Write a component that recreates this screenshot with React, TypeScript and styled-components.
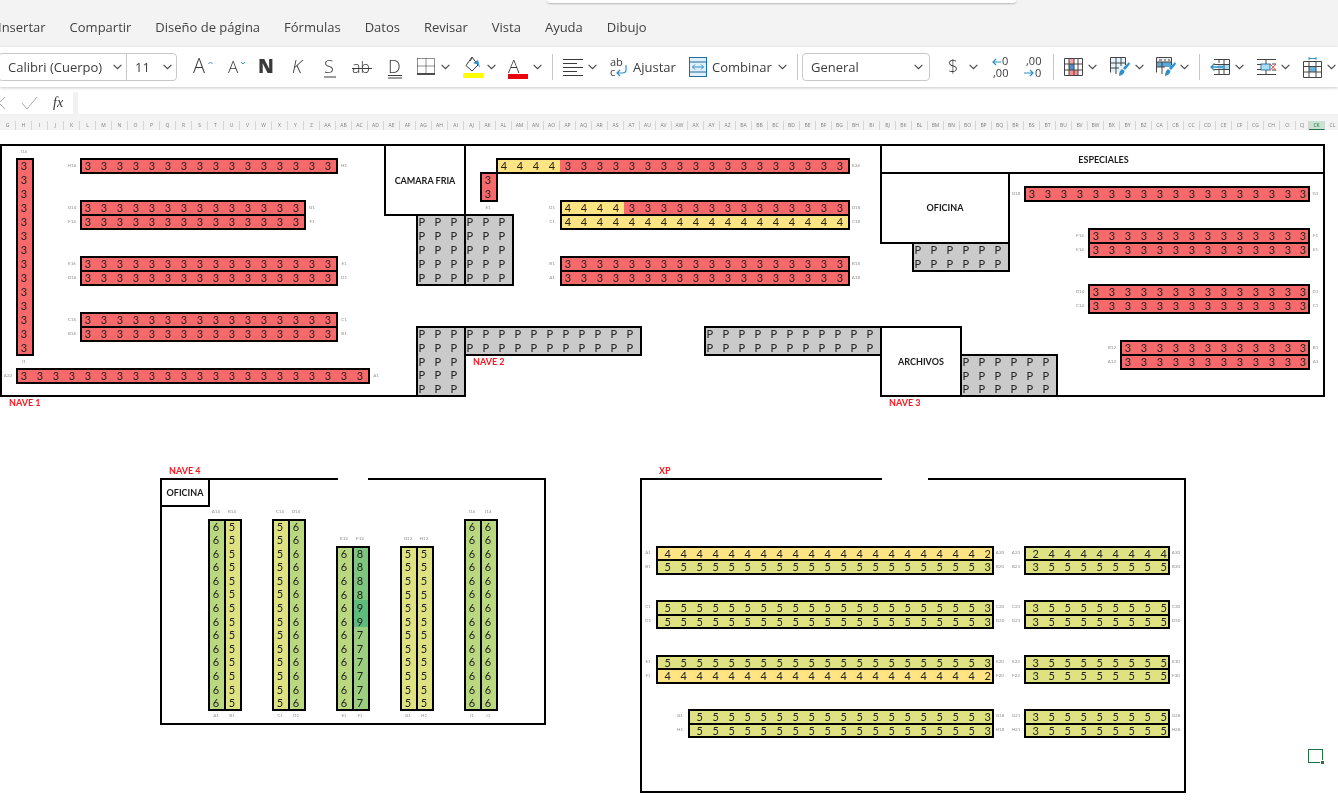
import React from "react";
import styled, {createGlobalStyle} from "styled-components";

const GlobalStyle = createGlobalStyle`
  html, body {
    margin: 0;
    padding: 0;
    height: 100%;
    overflow: hidden;
    background: white;
    font-family: "Open Sans", "Liberation Sans", sans-serif;
  }
`

const Page = styled.div`
  width: 1338px;
  height: 803px;
  overflow: hidden;
  filter: blur(0.4px);
`

const TopArea = styled.div`
  height: 47px;
  background: #F3F3F3;
`

const SearchStub = styled.div`
  margin-left: 547px;
  width: 469px;
  height: 3px;
  background: white;
  border-radius: 0 0 5px 5px;
  box-shadow: 0 1px 2px rgba(0, 0, 0, .25);
`

const Tabs = styled.div`
  display: flex;
  gap: 24px;
  margin-left: -2px;
  padding-top: 15px;
  font-size: 13px;
  line-height: 18px;
  color: #424242;
  white-space: nowrap;
`

const Ribbon = styled.div`
  position: relative;
  height: 40px;
  display: flex;
  align-items: center;
  background: white;
  box-shadow: 0 1px 3px rgba(0, 0, 0, .22);
  color: #3c3c3c;
  white-space: nowrap;
`

const SelectGroup = styled.div`
  display: flex;
  margin-left: -2px;
  width: 179px;
  height: 28px;
  box-sizing: border-box;
  border: 1px solid #c9c9c9;
  border-radius: 4px;
  font-size: 13px;
`

const SelectPart = styled.div<{ $w: number, $pad: number, $line?: boolean }>`
  width: ${p => p.$w}px;
  box-sizing: border-box;
  display: flex;
  align-items: center;
  justify-content: space-between;
  padding: 0 4px 0 ${p => p.$pad}px;
  border-right: ${p => p.$line ? '1px solid #c9c9c9' : 'none'};
`

const NumberSelect = styled(SelectPart)`
  margin-left: 4px;
  height: 28px;
  border: 1px solid #c9c9c9;
  border-radius: 4px;
  font-size: 13px;
  padding-right: 6px;
`

const Icon = styled.svg<{ $ml: number }>`
  display: block;
  flex: none;
  margin-left: ${p => p.$ml}px;
  font-family: "Open Sans", sans-serif;
  overflow: visible;
`

const ToolText = styled.span<{ $ml: number, $w: number }>`
  flex: none;
  margin-left: ${p => p.$ml}px;
  width: ${p => p.$w}px;
  font-size: 13px;
`

const Separator = styled.span<{ $ml: number }>`
  flex: none;
  margin-left: ${p => p.$ml}px;
  width: 1px;
  height: 26px;
  background: #c6c6c6;
`

const FormulaRow = styled.div`
  display: flex;
  gap: 5px;
  margin-top: 5px;
  height: 22px;
  padding-bottom: 1px;
  background: #F1F1F1;
`

const FormulaTools = styled.div`
  width: 73px;
  background: white;
  display: flex;
  align-items: center;
  overflow: hidden;
`

const FxMark = styled.span`
  margin-left: 15px;
  font-family: "Liberation Serif", serif;
  font-style: italic;
  font-size: 14px;
  color: #333;
`

const FormulaInput = styled.div`
  flex: 1;
  background: white;
`

const ColumnHeader = styled.div`
  display: flex;
  height: 15px;
  background: #F3F3F3;
  overflow: hidden;
`

const ColumnCell = styled.div<{ $w: number, $active: boolean }>`
  flex: none;
  width: ${p => p.$w}px;
  box-sizing: border-box;
  margin-top: 6px;
  height: 9px;
  line-height: 9px;
  text-align: center;
  font-size: 5px;
  color: ${p => p.$active ? '#1d6b40' : '#808080'};
  background: ${p => p.$active ? '#c8e3d1' : 'transparent'};
  border-right: 1px solid #d6d6d6;
  border-bottom: ${p => p.$active ? '1px solid #217346' : 'none'};
`

const Sheet = styled.div`
  padding-top: 14px;
  display: grid;
  grid-template-columns: repeat(81, 16px) 12px 15px repeat(2, 16px);
  grid-template-rows: repeat(17, 14px) 13px 15px repeat(4, 13.5px) 13.7px repeat(23, 13.62px);
  font-family: Lato, "Liberation Sans", sans-serif;
  background: white;
`

const WallBox = styled.div<{ $col: number, $row: number, $span: number, $rows: number, $sides: string }>`
  grid-column: ${p => p.$col + 1} / span ${p => p.$span};
  grid-row: ${p => p.$row + 1} / span ${p => p.$rows};
  margin: 0 -2px -2px 0;
  box-sizing: border-box;
  border-style: solid;
  border-color: #000;
  border-top-width: ${p => p.$sides.includes('t') ? 2 : 0}px;
  border-left-width: ${p => p.$sides.includes('l') ? 2 : 0}px;
  border-bottom-width: ${p => p.$sides.includes('b') ? 2 : 0}px;
  border-right-width: ${p => p.$sides.includes('r') ? 2 : 0}px;
  display: flex;
  align-items: center;
  justify-content: center;
  font-size: 9px;
  font-weight: 700;
  color: #1a1a1a;
  white-space: nowrap;
`

const RackBox = styled.div<{ $col: number, $row: number, $cols: number, $rows: number, $narrow: boolean }>`
  grid-column: ${p => p.$col + 1} / span ${p => p.$cols};
  grid-row: ${p => p.$row + 1} / span ${p => p.$rows};
  margin: 0 -2px -2px 0;
  display: grid;
  grid-template-columns: ${p => p.$narrow ? `repeat(${p.$cols - 1}, 16px) 14px` : `repeat(${p.$cols}, 16px)`};
  grid-template-rows: repeat(${p => p.$rows}, calc((100% - 2px) / ${p => p.$rows}));
  outline: 2px solid #000;
  outline-offset: -2px;
`

const tones: { [K: string]: string } = {
    '3': '#F8696B',
    '4': '#FFE484',
    '5': '#DEE283',
    '6': '#BAD880',
    '7': '#9BCF7F',
    '8': '#7EC67D',
    '9': '#5EBB7B',
    'P': '#CACACA',
}

const RackCell = styled.div<{ $tone: string, $align: string }>`
  background: ${p => tones[p.$tone]};
  font-size: 11px;
  line-height: 15px;
  color: #222;
  text-align: ${p => p.$align};
  padding: ${p => p.$align === 'right' ? '0 1px 0 0' : p.$align === 'left' ? '0 0 0 2.5px' : '0'};
  box-sizing: border-box;
`

const Tag = styled.div<{ $col: number, $row: number }>`
  grid-column: ${p => p.$col + 1};
  grid-row: ${p => p.$row + 1};
  align-self: center;
  text-align: center;
  font-size: 4.5px;
  color: #909090;
  white-space: nowrap;
`

const NaveLabel = styled.div<{ $col: number, $row: number, $pad: number }>`
  grid-column: ${p => p.$col + 1} / span 8;
  grid-row: ${p => p.$row + 1};
  align-self: center;
  padding-left: ${p => p.$pad}px;
  font-size: 9px;
  font-weight: 700;
  color: #f01c24;
`

const SelectedCell = styled.div<{ $col: number, $row: number }>`
  position: relative;
  grid-column: ${p => p.$col + 1};
  grid-row: ${p => p.$row + 1};
  margin-top: -1px;
  border: 1px solid #217346;
  box-sizing: border-box;

  &::after {
    content: "";
    position: absolute;
    right: -2px;
    bottom: -2px;
    width: 3px;
    height: 3px;
    background: #217346;
    border: 1px solid white;
    border-width: 1px 0 0 1px;
  }
`

function colName(i: number) {
    let name = ''
    let n = i
    while (n >= 0) {
        name = String.fromCharCode(65 + n % 26) + name
        n = Math.floor(n / 26) - 1
    }
    return name
}

const Chevron = ({ml, w = 9}: { ml: number, w?: number }) => (
    <Icon $ml={ml} width={w} height="6" viewBox="0 0 9 6">
        <path d="M.6.8 4.5 4.7 8.4.8" fill="none" stroke="#444" strokeWidth="1.1"/>
    </Icon>
)

const Letter = ({ml, w, text, size = 20, weight = 300, italic = false, children}: {
    ml: number, w: number, text: string, size?: number, weight?: number, italic?: boolean, children?: React.ReactNode
}) => (
    <Icon $ml={ml} width={w} height="24" viewBox={`0 0 ${w} 24`}>
        <text x="0" y="18" fontSize={size} fontWeight={weight} fontStyle={italic ? 'italic' : 'normal'}
              fill="#3a3a3a">{text}</text>
        {children}
    </Icon>
)

const blue = '#2f8fc7'
const lineDark = '#3a3a3a'

function Toolbar() {
    return (
        <Ribbon>
            <SelectGroup>
                <SelectPart $w={128} $pad={9} $line>Calibri (Cuerpo)<Chevron ml={0}/></SelectPart>
                <SelectPart $w={49} $pad={8}>11<Chevron ml={0}/></SelectPart>
            </SelectGroup>
            <Letter ml={16} w={20} text="A">
                <path d="M15.5 9 17.5 7 19.500 9" fill="none" stroke={blue} strokeWidth="1"/>
            </Letter>
            <Letter ml={15} w={18} text="A" size={17}>
                <path d="M13 7 15 9 17 7" fill="none" stroke={blue} strokeWidth="1"/>
            </Letter>
            <Letter ml={12} w={16} text="N" size={19} weight={800}/>
            <Letter ml={18} w={12} text="K" size={18} italic/>
            <Letter ml={20} w={12} text="S" size={18}>
                <path d="M0 22H12" stroke={lineDark}/>
            </Letter>
            <Letter ml={16} w={20} text="ab" size={16}>
                <path d="M0 13.500H20" stroke={lineDark}/>
            </Letter>
            <Letter ml={16} w={14} text="D" size={18}>
                <path d="M0 20.500H14M0 23H14" stroke={lineDark}/>
            </Letter>
            <Icon $ml={15} width="18" height="18" viewBox="0 0 18 18">
                <path d="M.5.500H17.500V15M.5.500V15M9 .5V15M.5 8H17.500" fill="none" stroke="#222"
                      strokeDasharray="1 1"/>
                <path d="M0 16H18" stroke="#111" strokeWidth="1.500"/>
            </Icon>
            <Chevron ml={6}/>
            <Icon $ml={13} width="20" height="22" viewBox="0 0 20 22">
                <path d="M9 1 15 9 9 15 3 9.500Z" fill="white" stroke={lineDark}/>
                <path d="M7 5 9 2" stroke={lineDark}/>
                <path d="M10 7 15 4 17 12 14.500 8.500Z" fill={blue}/>
                <rect y="17" width="20" height="5" fill="#FFFF00"/>
            </Icon>
            <Chevron ml={4}/>
            <Letter ml={12} w={20} text="A" size={19}>
                <rect y="19" width="20" height="5" fill="#E8050F"/>
            </Letter>
            <Chevron ml={5}/>
            <Separator $ml={10}/>
            <Icon $ml={10} width="20" height="20" viewBox="0 0 20 20">
                <path d="M0 2.500H20M0 6.500H14M0 10.500H20M0 14.500H14M0 18.500H20" stroke={lineDark}/>
            </Icon>
            <Chevron ml={5}/>
            <Icon $ml={13} width="18" height="24" viewBox="0 0 18 24">
                <text x="0" y="11" fontSize="11" fill={lineDark}>ab</text>
                <text x="0" y="21" fontSize="11" fill={lineDark}>c</text>
                <path d="M16 10V15Q16 18 12 18H7M10 15 7 18 10 21" fill="none" stroke={blue} strokeWidth="1.200"/>
            </Icon>
            <ToolText $ml={5} $w={44}>Ajustar</ToolText>
            <Icon $ml={12} width="18" height="20" viewBox="0 0 18 20">
                <rect x=".5" y=".5" width="17" height="19" fill="#dff0fa" stroke="#1f6f9f"/>
                <path d="M.5 5H17.500M.5 15H17.500" stroke="#1f6f9f"/>
                <path d="M3.500 10H14.500M6 7.500 3.500 10 6 12.500M12 7.500 14.500 10 12 12.500" fill="none" stroke={blue}/>
            </Icon>
            <ToolText $ml={5} $w={62}>Combinar</ToolText>
            <Chevron ml={4}/>
            <Separator $ml={10}/>
            <NumberSelect $w={128} $pad={8}>General<Chevron ml={0}/></NumberSelect>
            <Letter ml={18} w={10} text="$" size={18}/>
            <Chevron ml={11}/>
            <Icon $ml={14} width="18" height="22" viewBox="0 0 18 22">
                <text x="10" y="9" fontSize="11" fill={lineDark}>0</text>
                <text x="1" y="21" fontSize="11" fill={lineDark}>,00</text>
                <path d="M9 6H1M4 3 1 6 4 9" fill="none" stroke={blue} strokeWidth="1.200"/>
            </Icon>
            <Icon $ml={13} width="19" height="22" viewBox="0 0 19 22">
                <text x="3" y="9" fontSize="11" fill={lineDark}>,00</text>
                <text x="12" y="21" fontSize="11" fill={lineDark}>0</text>
                <path d="M1 17H10M7 14 10 17 7 20" fill="none" stroke={blue} strokeWidth="1.200"/>
            </Icon>
            <Separator $ml={11}/>
            <Icon $ml={10} width="19" height="18" viewBox="0 0 19 18">
                <rect x="5" width="5" height="6" fill="#f7a3a5"/>
                <rect x="5" y="6" width="5" height="6" fill="#4f8fc7"/>
                <rect x="5" y="12" width="9" height="6" fill="#f78f91"/>
                <path d="M.5.500H18.500V17.500H.5ZM5 .5V17.500M10 .5V17.500M14 .5V17.500M.5 6H18.500M.5 12H18.500" fill="none"
                      stroke="#444"/>
            </Icon>
            <Chevron ml={5}/>
            <Icon $ml={13} width="20" height="20" viewBox="0 0 20 20">
                <rect x=".5" y=".5" width="15" height="15" fill="#e5f3fb"/>
                <path d="M.5.500H15.500M.5.500V15.500M.5 6H15.500M.5 11H9M6 .5V17M11 .5V9M15.500.5V8" fill="none" stroke="#444"/>
                <path d="M19 5 13 11 15 13 20 7ZM12 12Q9 14 9 19 14 18 14.500 14Z" fill={blue}/>
            </Icon>
            <Chevron ml={5}/>
            <Icon $ml={12} width="20" height="20" viewBox="0 0 20 20">
                <rect x=".5" y="5" width="15" height="5" fill="#5ba7d8"/>
                <rect x=".5" y=".5" width="15" height="4" fill="#eee"/>
                <path d="M.5.500H15.500M.5.500V15.500M.5 5H15.500M.5 10H9M6 5V17M15.500.5V8" fill="none" stroke="#444"/>
                <path d="M3 3H6M8 3H10M12 3H14" stroke="#444"/>
                <path d="M19 5 13 11 15 13 20 7ZM12 12Q9 14 9 19 14 18 14.500 14Z" fill={blue}/>
            </Icon>
            <Chevron ml={4}/>
            <Separator $ml={10}/>
            <Icon $ml={10} width="20" height="16" viewBox="0 0 20 16">
                <rect x="8" y="5" width="11" height="6" fill="#a9dcf6"/>
                <path d="M4 .5H19.500V15.500H4M4 5.500H19.500M4 10.500H19.500M9 .5V4M14 .5V15.500M9 11V15.500" fill="none" stroke="#444"/>
                <path d="M13 8H1M4.500 4.500 1 8 4.500 11.500" fill="none" stroke={blue} strokeWidth="1.300"/>
            </Icon>
            <Chevron ml={5}/>
            <Icon $ml={13} width="20" height="16" viewBox="0 0 20 16">
                <rect x="4" y="5" width="9" height="6" fill="#a9dcf6" stroke="#2f7fb0"/>
                <path d="M0 .5H19M0 15.500H19M9 .5V5M9 11V15.500M0 5.500H4M0 10.500H4M15 5H19M15 11H19" fill="none" stroke="#444"/>
                <path d="M13 5 19 11.500M19 5 13 11.500" stroke="#e8443a"/>
            </Icon>
            <Chevron ml={4}/>
            <Icon $ml={13} width="19" height="21" viewBox="0 0 19 21">
                <rect x="6" y="9" width="7" height="6" fill="#6bb3df"/>
                <path d="M.5 4.500H18.500V20.500H.5ZM.5 9.500H18.500M.5 15H18.500M6 4.500V20.500M13 4.500V20.500" fill="none" stroke="#444"/>
                <path d="M6 1.500H13M6 0V3M13 0V3" stroke={blue}/>
            </Icon>
            <Chevron ml={5}/>
        </Ribbon>
    )
}

type RackProps = {
    col: number
    row: number
    cells: string
    cols?: number
    tone?: string
    align?: string
    narrow?: boolean
}

function Rack({col, row, cells, cols, tone, align = 'center', narrow = false}: RackProps) {
    const across = cols ?? cells.length
    return (
        <RackBox $col={col} $row={row} $cols={across} $rows={Math.ceil(cells.length / across)} $narrow={narrow}>
            {cells.split('').map((c, i) => (
                <RackCell key={i} $tone={tone ?? c} $align={c === 'P' ? 'left' : align}>{c}</RackCell>
            ))}
        </RackBox>
    )
}

const Wall = ({col, row, span, rows = 1, sides, children}: {
    col: number, row: number, span: number, rows?: number, sides: string, children?: React.ReactNode
}) => (
    <WallBox $col={col} $row={row} $span={span} $rows={rows} $sides={sides}>{children}</WallBox>
)

const label = (col: number, row: number, text: string) => (
    <Tag key={col + '-' + row} $col={col} $row={row}>{text}</Tag>
)

const Vertical = ({col, row, cells}: { col: number, row: number, cells: string }) => (
    <Rack col={col} row={row} cells={cells} cols={1}/>
)

function Nave1() {
    return (
        <>
            <Vertical col={1} row={1} cells={'3'.repeat(14)}/>
            {label(1, 0, 'I14')}
            {label(1, 15, 'I1')}
            <Rack col={5} row={1} cells={'3'.repeat(16)}/>
            <Rack col={5} row={4} cells={'3'.repeat(14)}/>
            <Rack col={5} row={5} cells={'3'.repeat(14)}/>
            <Rack col={5} row={8} cells={'3'.repeat(16)}/>
            <Rack col={5} row={9} cells={'3'.repeat(16)}/>
            <Rack col={5} row={12} cells={'3'.repeat(16)}/>
            <Rack col={5} row={13} cells={'3'.repeat(16)}/>
            <Rack col={1} row={16} cells={'3'.repeat(22)}/>
            {label(4, 1, 'H16')}{label(21, 1, 'H1')}
            {label(4, 4, 'G14')}{label(19, 4, 'G1')}
            {label(4, 5, 'F14')}{label(19, 5, 'F1')}
            {label(4, 8, 'E16')}{label(21, 8, 'E1')}
            {label(4, 9, 'D16')}{label(21, 9, 'D1')}
            {label(4, 12, 'C16')}{label(21, 12, 'C1')}
            {label(4, 13, 'B16')}{label(21, 13, 'B1')}
            {label(0, 16, 'A22')}{label(23, 16, 'A1')}
            <NaveLabel $col={0} $row={18} $pad={9}>NAVE 1</NaveLabel>
        </>
    )
}

function Nave2() {
    return (
        <>
            <Rack col={26} row={5} cols={3} cells={'P'.repeat(15)}/>
            <Rack col={29} row={5} cols={3} cells={'P'.repeat(15)}/>
            <Rack col={26} row={13} cols={3} cells={'P'.repeat(15)}/>
            <Rack col={29} row={13} cols={11} cells={'P'.repeat(22)}/>
            <Rack col={44} row={13} cols={11} cells={'P'.repeat(22)}/>
            <Vertical col={30} row={2} cells="33"/>
            {label(30, 4, 'E1')}
            <Rack col={31} row={1} cells={'4444' + '3'.repeat(18)}/>
            {label(53, 1, 'E24')}
            <Rack col={35} row={4} cells={'4444' + '3'.repeat(14)}/>
            <Rack col={35} row={5} cells={'4'.repeat(18)}/>
            <Rack col={35} row={8} cells={'3'.repeat(18)}/>
            <Rack col={35} row={9} cells={'3'.repeat(18)}/>
            {label(34, 4, 'D1')}{label(53, 4, 'D18')}
            {label(34, 5, 'C1')}{label(53, 5, 'C18')}
            {label(34, 8, 'B1')}{label(53, 8, 'B18')}
            {label(34, 9, 'A1')}{label(53, 9, 'A18')}
            <Wall col={24} row={0} span={5} rows={5} sides="tlbr">CAMARA FRIA</Wall>
            <NaveLabel $col={29} $row={15} $pad={9}>NAVE 2</NaveLabel>
        </>
    )
}

function Nave3() {
    return (
        <>
            <Rack col={57} row={7} cols={6} cells={'P'.repeat(12)}/>
            <Rack col={60} row={15} cols={6} cells={'P'.repeat(18)}/>
            <Wall col={55} row={0} span={28} rows={2} sides="tlb">ESPECIALES</Wall>
            <Wall col={55} row={2} span={8} rows={5} sides="lbr">OFICINA</Wall>
            <Wall col={55} row={13} span={5} rows={5} sides="tlbr">ARCHIVOS</Wall>
            <Rack col={64} row={3} cells={'3'.repeat(18)} narrow/>
            <Rack col={68} row={6} cells={'3'.repeat(14)} narrow/>
            <Rack col={68} row={7} cells={'3'.repeat(14)} narrow/>
            <Rack col={68} row={10} cells={'3'.repeat(14)} narrow/>
            <Rack col={68} row={11} cells={'3'.repeat(14)} narrow/>
            <Rack col={70} row={14} cells={'3'.repeat(12)} narrow/>
            <Rack col={70} row={15} cells={'3'.repeat(12)} narrow/>
            {label(63, 3, 'G18')}{label(82, 3, 'G1')}
            {label(67, 6, 'F14')}{label(82, 6, 'F1')}
            {label(67, 7, 'E14')}{label(82, 7, 'E1')}
            {label(67, 10, 'D14')}{label(82, 10, 'D1')}
            {label(67, 11, 'C14')}{label(82, 11, 'C1')}
            {label(69, 14, 'B12')}{label(82, 14, 'B1')}
            {label(69, 15, 'A12')}{label(82, 15, 'A1')}
            <NaveLabel $col={55} $row={18} $pad={9}>NAVE 3</NaveLabel>
        </>
    )
}

function Nave4() {
    const tall = [
        {col: 13, name: 'A', cells: '6'},
        {col: 14, name: 'B', cells: '5'},
        {col: 17, name: 'C', cells: '5'},
        {col: 18, name: 'D', cells: '6'},
        {col: 29, name: 'I', cells: '6'},
        {col: 30, name: 'J', cells: '6'},
    ]
    const short = [
        {col: 21, name: 'E', cells: '6'.repeat(12)},
        {col: 22, name: 'F', cells: '888899777777'},
        {col: 25, name: 'G', cells: '5'.repeat(12)},
        {col: 26, name: 'H', cells: '5'.repeat(12)},
    ]
    return (
        <>
            <NaveLabel $col={10} $row={23} $pad={9}>NAVE 4</NaveLabel>
            <Wall col={10} row={24} span={24} rows={18} sides="lbr"/>
            <Wall col={10} row={24} span={11} sides="t"/>
            <Wall col={23} row={24} span={11} sides="t"/>
            <Wall col={10} row={24} span={3} rows={2} sides="tlbr">OFICINA</Wall>
            {tall.map(r => (
                <React.Fragment key={r.name}>
                    {label(r.col, 26, r.name + '14')}
                    <Vertical col={r.col} row={27} cells={r.cells.repeat(14)}/>
                    {label(r.col, 41, r.name + '1')}
                </React.Fragment>
            ))}
            {short.map(r => (
                <React.Fragment key={r.name}>
                    {label(r.col, 28, r.name + '12')}
                    <Vertical col={r.col} row={29} cells={r.cells}/>
                    {label(r.col, 41, r.name + '1')}
                </React.Fragment>
            ))}
        </>
    )
}

function Xp() {
    const rows = [
        {name: 'A', row: 29, cells: '4'.repeat(20) + '2', tone: '4', right: '244444444', last: '30'},
        {name: 'B', row: 30, cells: '5'.repeat(20) + '3', tone: '5', right: '355555555', last: '30'},
        {name: 'C', row: 33, cells: '5'.repeat(20) + '3', tone: '5', right: '355555555', last: '30'},
        {name: 'D', row: 34, cells: '5'.repeat(20) + '3', tone: '5', right: '355555555', last: '30'},
        {name: 'E', row: 37, cells: '5'.repeat(20) + '3', tone: '5', right: '355555555', last: '30'},
        {name: 'F', row: 38, cells: '4'.repeat(20) + '2', tone: '4', right: '355555555', last: '30'},
        {name: 'G', row: 41, cells: '5'.repeat(18) + '3', tone: '5', right: '355555555', last: '28'},
        {name: 'H', row: 42, cells: '5'.repeat(18) + '3', tone: '5', right: '355555555', last: '28'},
    ]
    return (
        <>
            <NaveLabel $col={40} $row={23} $pad={19}>XP</NaveLabel>
            <Wall col={40} row={24} span={34} rows={23} sides="lbr"/>
            <Wall col={40} row={24} span={15} sides="t"/>
            <Wall col={58} row={24} span={16} sides="t"/>
            {rows.map(r => {
                const isShort = r.cells.length === 19
                const end = isShort ? 18 : 20
                return (
                    <React.Fragment key={r.name}>
                        {label(isShort ? 42 : 40, r.row, r.name + '1')}
                        <Rack col={isShort ? 43 : 41} row={r.row} cells={r.cells} tone={r.tone} align="right"/>
                        {label(62, r.row, r.name + end)}
                        {label(63, r.row, r.name + (end + 3))}
                        <Rack col={64} row={r.row} cells={r.right} tone="5" align="right"/>
                        {label(73, r.row, r.name + r.last)}
                    </React.Fragment>
                )
            })}
        </>
    )
}

function App() {
    const columns = Array.from({length: 90}, (_, i) => i)
    return (
        <Page>
            <GlobalStyle/>
            <TopArea>
                <SearchStub/>
                <Tabs>
                    {['Insertar', 'Compartir', 'Diseño de página', 'Fórmulas', 'Datos', 'Revisar', 'Vista', 'Ayuda', 'Dibujo']
                        .map(tab => <span key={tab}>{tab}</span>)}
                </Tabs>
            </TopArea>
            <Toolbar/>
            <FormulaRow>
                <FormulaTools>
                    <Icon $ml={-8} width="14" height="14" viewBox="0 0 14 14">
                        <path d="M1 1 13 13M13 1 1 13" stroke="#a8a8a8"/>
                    </Icon>
                    <Icon $ml={15} width="17" height="14" viewBox="0 0 17 14">
                        <path d="M1 7 6 13 16 1" fill="none" stroke="#a8a8a8"/>
                    </Icon>
                    <FxMark>fx</FxMark>
                </FormulaTools>
                <FormulaInput/>
            </FormulaRow>
            <ColumnHeader>
                {columns.map(i => (
                    <ColumnCell key={i} $w={i === 81 ? 13 : 16} $active={i === 82}>{colName(i + 6)}</ColumnCell>
                ))}
            </ColumnHeader>
            <Sheet>
                <Wall col={0} row={0} span={83} rows={18} sides="tlr"/>
                <Wall col={0} row={17} span={29} sides="b"/>
                <Wall col={55} row={17} span={28} sides="b"/>
                <Nave1/>
                <Nave2/>
                <Nave3/>
                <Nave4/>
                <Xp/>
                <SelectedCell $col={82} $row={44}/>
            </Sheet>
        </Page>
    )
}

export default App
